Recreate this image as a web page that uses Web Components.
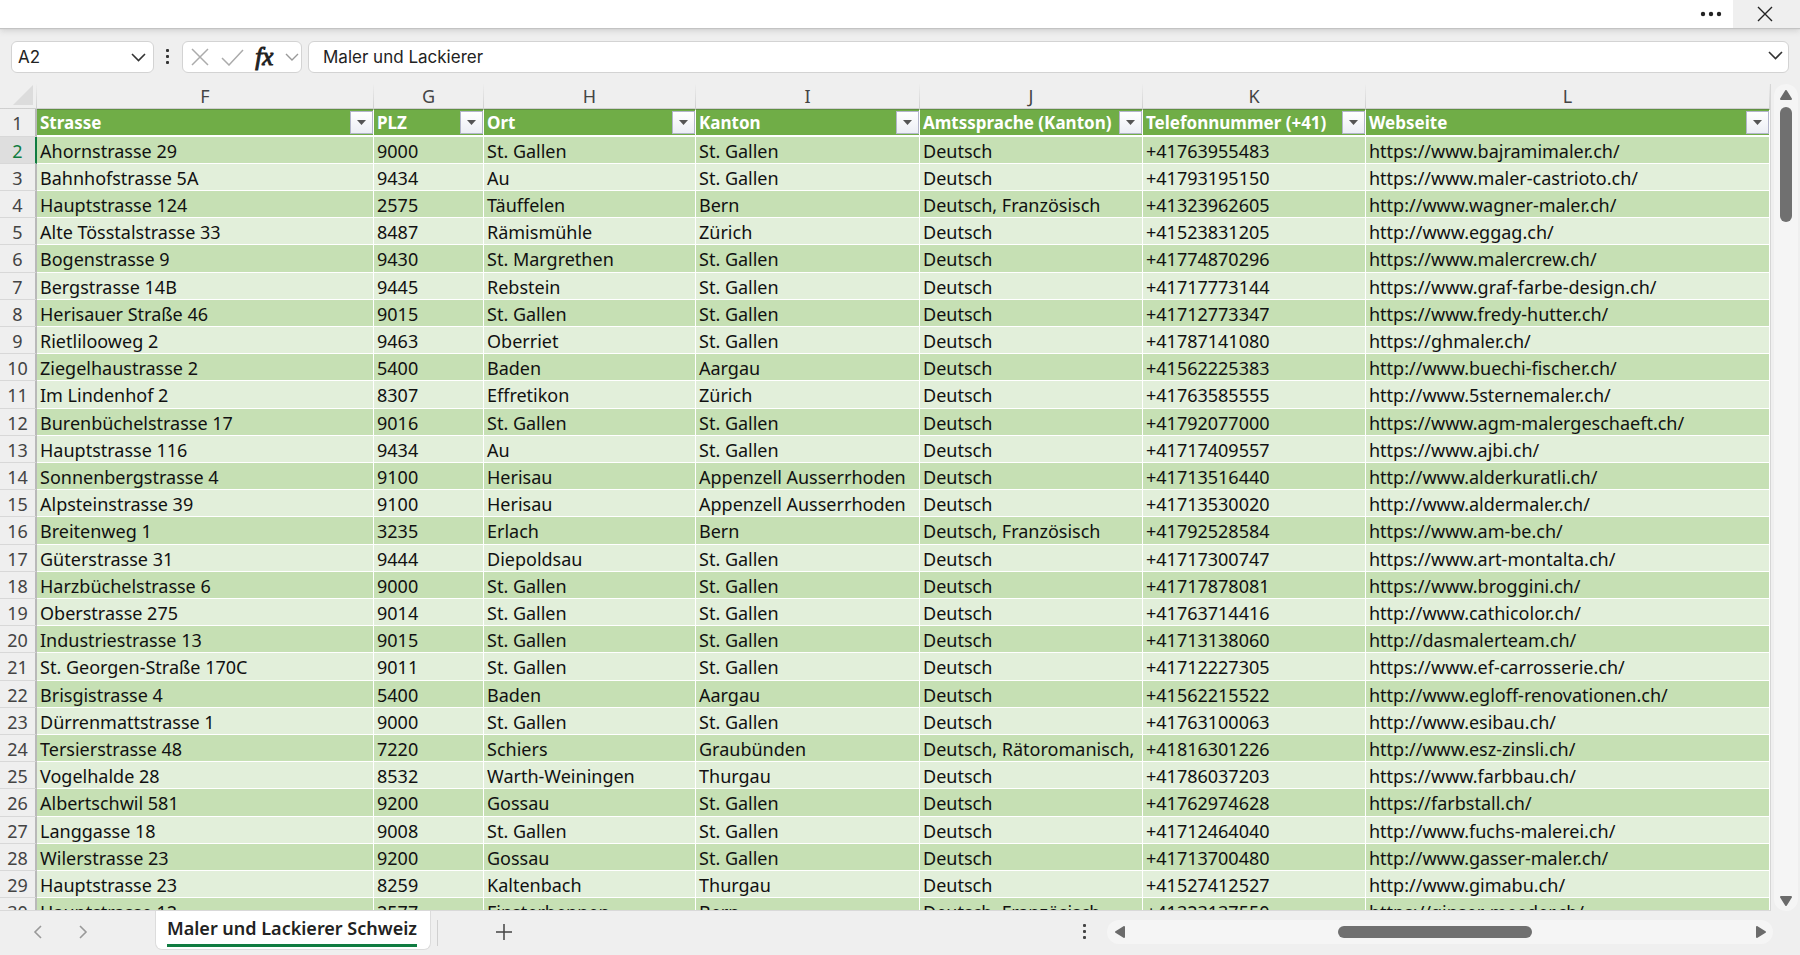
<!DOCTYPE html>
<html lang="de">
<head>
<meta charset="utf-8">
<title>Maler und Lackierer Schweiz</title>
<style>
html,body{margin:0;height:100%}
body{font-family:"Noto Sans","Open Sans",sans-serif;background:#efefef;color:#222;overflow:hidden}
</style>
</head>
<body>
<wb-app></wb-app>
<script>
const BASE = `<style>
*{box-sizing:border-box}
button{font:inherit;color:inherit;background:none;border:0;padding:0;margin:0;display:flex;align-items:center;justify-content:center}
input{font:inherit;color:inherit;border:0;background:none;padding:0;margin:0;min-width:0;outline:0}
svg{display:block;flex:none}
</style>`;
function define(name, html, setup) {
  const tpl = document.createElement('template');
  tpl.innerHTML = BASE + html;
  customElements.define(name, class extends HTMLElement {
    constructor() {
      super();
      this.attachShadow({mode: 'open'}).append(tpl.content.cloneNode(true));
    }
    connectedCallback() { if (setup) setup(this, this.shadowRoot); }
  });
}

define('wb-titlebar', `<style>
:host{display:flex;justify-content:flex-end;height:28px;background:#fff;position:relative;box-shadow:0 1px 1px #c3c3c3,0 3px 6px #d2d2d2}
button{width:44px;height:28px}
.close{width:67px;background:#efefef;padding-right:3px}
</style>
<button aria-label="Weitere Optionen"><svg width="22" height="6" fill="#222"><circle cx="3" cy="3" r="2.2"/><circle cx="11" cy="3" r="2.2"/><circle cx="19" cy="3" r="2.2"/></svg></button>
<button class="close" aria-label="Schliessen"><svg width="16" height="16" stroke="#222" stroke-width="1.4"><path d="M1 1l14 14M15 1L1 15"/></svg></button>`);

define('wb-field', `<style>
:host{display:flex;align-items:center;height:32px;background:#fff;border:1px solid #d3d3d3;border-radius:6px}
</style><slot></slot>`);

define('wb-formula-bar', `<style>
:host{display:flex;align-items:center;padding:13px 11px 11px;font-family:Inter,"Open Sans",sans-serif;font-size:17px;color:#222}
.name{width:143px;padding:0 7px 0 6px}
.name input{flex:1}
.more{width:28px;height:32px}
.fx{width:120px;justify-content:space-between;padding:0 2px 0 8px}
.formula{flex:1;margin-left:6px;padding:0 5px 0 14px}
.formula input{flex:1}
.formula button{padding-bottom:4px}
svg.fx-sign,i{font:italic 400 25px "Liberation Serif",serif;line-height:24px;color:#222;-webkit-text-stroke:1px #222}
</style>
<wb-field class="name"><input value="A2" aria-label="Namenfeld"><button aria-label="Namenfeld öffnen"><svg width="15" height="9" fill="none" stroke="#333" stroke-width="1.6"><path d="M1 1l6.500 6.500L14 1"/></svg></button></wb-field>
<button class="more" aria-label="Grösse ändern"><svg width="4" height="16" fill="#333"><rect width="3" height="3" rx="1"/><rect y="6" width="3" height="3" rx="1"/><rect y="12" width="3" height="3" rx="1"/></svg></button>
<wb-field class="fx">
<button aria-label="Abbrechen"><svg width="18" height="18" stroke="#ababab" stroke-width="1.500"><path d="M1 1l16 16M17 1L1 17"/></svg></button>
<button aria-label="Eingeben"><svg width="23" height="17" fill="none" stroke="#ababab" stroke-width="1.500"><path d="M1 9l7 7L22 1"/></svg></button>
<button aria-label="Funktion einfügen"><i>fx</i></button>
<button aria-label="Funktionen"><svg width="14" height="9" fill="none" stroke="#999" stroke-width="1.400"><path d="M1 1l6 6 6-6"/></svg></button>
</wb-field>
<wb-field class="formula"><input value="Maler und Lackierer" aria-label="Bearbeitungsleiste"><button aria-label="Bearbeitungsleiste erweitern"><svg width="15" height="9" fill="none" stroke="#333" stroke-width="1.600"><path d="M1 1l6.500 6.500L14 1"/></svg></button></wb-field>`);

define('wb-scrollbar', `<style>
:host{display:flex;background:#f5f5f5;border-radius:12px}
:host([dir-y]){flex-direction:column;align-items:center;width:24px;padding:6px 0 5px}
:host([dir-x]){align-items:center;height:24px;padding:0 7px 0 8px}
.track{flex:1;display:flex;align-self:stretch}
:host([dir-y]) .track{flex-direction:column;align-items:center;padding:7px 0}
:host([dir-x]) .track{align-items:center}
.before{flex:var(--before,0)}
.after{flex:var(--after,1)}
.thumb{flex:var(--size,1);background:#707070;border-radius:6px}
:host([dir-y]) .thumb{width:12px}
:host([dir-x]) .thumb{height:12px}
svg{fill:#6b6b6b;stroke:#6b6b6b;stroke-width:2;stroke-linejoin:round}
:host([dir-x]) svg.y,:host([dir-y]) svg.x{display:none}
</style>
<button aria-label="Zurück"><svg class="y" width="12" height="10"><path d="M6 1l5 8H1z"/></svg><svg class="x" width="10" height="12"><path d="M1 6l8-5v10z"/></svg></button>
<div class="track"><div class="before"></div><div class="thumb"></div><div class="after"></div></div>
<button aria-label="Vor"><svg class="y" width="12" height="10"><path d="M6 9l5-8H1z"/></svg><svg class="x" width="10" height="12"><path d="M9 6L1 1v10z"/></svg></button>`);

define('wb-filter', `<style>
:host{display:block;flex:none;width:23px;height:23px}
button{width:23px;height:23px;background:linear-gradient(#fff,#eceef4);border:1px solid #b3b5cb}
</style><button aria-label="Filter"><svg width="9" height="5" fill="#555"><path d="M0 0h9L4.500 5z"/></svg></button>`);

const COLS = [['F','Strasse'],['G','PLZ'],['H','Ort'],['I','Kanton'],['J','Amtssprache (Kanton)'],['K','Telefonnummer (+41)'],['L','Webseite']];
const DATA = `Ahornstrasse 29|9000|St. Gallen|St. Gallen|Deutsch|+41763955483|https://www.bajramimaler.ch/
Bahnhofstrasse 5A|9434|Au|St. Gallen|Deutsch|+41793195150|https://www.maler-castrioto.ch/
Hauptstrasse 124|2575|Täuffelen|Bern|Deutsch, Französisch|+41323962605|http://www.wagner-maler.ch/
Alte Tösstalstrasse 33|8487|Rämismühle|Zürich|Deutsch|+41523831205|http://www.eggag.ch/
Bogenstrasse 9|9430|St. Margrethen|St. Gallen|Deutsch|+41774870296|https://www.malercrew.ch/
Bergstrasse 14B|9445|Rebstein|St. Gallen|Deutsch|+41717773144|https://www.graf-farbe-design.ch/
Herisauer Straße 46|9015|St. Gallen|St. Gallen|Deutsch|+41712773347|https://www.fredy-hutter.ch/
Rietlilooweg 2|9463|Oberriet|St. Gallen|Deutsch|+41787141080|https://ghmaler.ch/
Ziegelhaustrasse 2|5400|Baden|Aargau|Deutsch|+41562225383|http://www.buechi-fischer.ch/
Im Lindenhof 2|8307|Effretikon|Zürich|Deutsch|+41763585555|http://www.5sternemaler.ch/
Burenbüchelstrasse 17|9016|St. Gallen|St. Gallen|Deutsch|+41792077000|https://www.agm-malergeschaeft.ch/
Hauptstrasse 116|9434|Au|St. Gallen|Deutsch|+41717409557|https://www.ajbi.ch/
Sonnenbergstrasse 4|9100|Herisau|Appenzell Ausserrhoden|Deutsch|+41713516440|http://www.alderkuratli.ch/
Alpsteinstrasse 39|9100|Herisau|Appenzell Ausserrhoden|Deutsch|+41713530020|http://www.aldermaler.ch/
Breitenweg 1|3235|Erlach|Bern|Deutsch, Französisch|+41792528584|https://www.am-be.ch/
Güterstrasse 31|9444|Diepoldsau|St. Gallen|Deutsch|+41717300747|https://www.art-montalta.ch/
Harzbüchelstrasse 6|9000|St. Gallen|St. Gallen|Deutsch|+41717878081|https://www.broggini.ch/
Oberstrasse 275|9014|St. Gallen|St. Gallen|Deutsch|+41763714416|http://www.cathicolor.ch/
Industriestrasse 13|9015|St. Gallen|St. Gallen|Deutsch|+41713138060|http://dasmalerteam.ch/
St. Georgen-Straße 170C|9011|St. Gallen|St. Gallen|Deutsch|+41712227305|https://www.ef-carrosserie.ch/
Brisgistrasse 4|5400|Baden|Aargau|Deutsch|+41562215522|http://www.egloff-renovationen.ch/
Dürrenmattstrasse 1|9000|St. Gallen|St. Gallen|Deutsch|+41763100063|http://www.esibau.ch/
Tersierstrasse 48|7220|Schiers|Graubünden|Deutsch, Rätoromanisch,|+41816301226|http://www.esz-zinsli.ch/
Vogelhalde 28|8532|Warth-Weiningen|Thurgau|Deutsch|+41786037203|https://www.farbbau.ch/
Albertschwil 581|9200|Gossau|St. Gallen|Deutsch|+41762974628|https://farbstall.ch/
Langgasse 18|9008|St. Gallen|St. Gallen|Deutsch|+41712464040|http://www.fuchs-malerei.ch/
Wilerstrasse 23|9200|Gossau|St. Gallen|Deutsch|+41713700480|http://www.gasser-maler.ch/
Hauptstrasse 23|8259|Kaltenbach|Thurgau|Deutsch|+41527412527|http://www.gimabu.ch/
Hauptstrasse 12|2577|Finsterhennen|Bern|Deutsch, Französisch|+41323137550|https://ginser-meeder.ch/`.split('\n').map(r => r.split('|'));

define('wb-sheet', `<style>
:host{display:block;overflow:hidden;min-height:0;border-right:1px solid #d6d6d6;border-bottom:1px solid #d9d9d9}
table{width:100%;table-layout:fixed;border-collapse:separate;border-spacing:0;font-size:18px;line-height:24px;color:#111}
th,td{padding:0 0 0 3px;text-align:left;white-space:nowrap;overflow:hidden;height:27px;border-right:1px solid #fff;border-bottom:1px solid #fff}
.letters th{height:25px;padding:0;text-align:center;font-weight:400;font-size:18px;line-height:22px;color:#444;border-bottom:1px solid #a3a0a6;border-right:1px solid;border-image:linear-gradient(#efefef,#cfcfcf) 1}
.letters th:first-child{padding:0 3px 2px 0}
.letters svg{margin-left:auto}
.titles th{height:28px;background:#70ad47;color:#fff;font-size:17px;font-weight:700;border-bottom:2px solid #fff;border-top:1px solid #5f8f42}
.titles div{display:flex;align-items:center;justify-content:space-between;height:25px}
tbody td{padding-top:1px}
tbody tr:nth-child(odd) td{background:#c6e0b4}
tbody tr:nth-child(even) td{background:#e2efda}
tbody tr:nth-child(5n) td{height:28px}
tbody th,.titles th:first-child{background:#efefef;color:#444;font-weight:400;font-size:18px;text-align:center;padding:1px 0 0;border:0;border-right:2px solid #b9b9b9;border-bottom:1px solid #d8d8d8}
tbody tr:first-child th{background:#dedede;color:#107c41;border-right-color:#107c41}
</style>
<table><colgroup><col style="width:37px"><col style="width:337px"><col style="width:110px"><col style="width:212px"><col style="width:224px"><col style="width:223px"><col style="width:223px"><col></colgroup>
<thead><tr class="letters"><th><svg width="20" height="20" fill="#dcdcdc"><path d="M20 0v20H0z"/></svg></th></tr><tr class="titles"><th scope="row">1</th></tr></thead><tbody></tbody></table>`,
(host, root) => {
  const letters = root.querySelector('.letters'), titles = root.querySelector('.titles'), body = root.querySelector('tbody');
  for (const [l, t] of COLS) {
    letters.insertAdjacentHTML('beforeend', `<th scope="col">${l}</th>`);
    titles.insertAdjacentHTML('beforeend', `<th scope="col"><div><span>${t}</span><wb-filter></wb-filter></div></th>`);
  }
  body.innerHTML = DATA.map((r, i) => `<tr><th scope="row">${i + 2}</th>${r.map(c => `<td>${c}</td>`).join('')}</tr>`).join('');
});

define('wb-tabs', `<style>
:host{display:flex;align-items:flex-start;height:44px;padding-right:27px}
nav{display:flex;padding-left:14px}
nav button{width:46px;height:42px}
.tab{height:39px;margin-left:49px;padding:0 13px 0 11px;background:#fff;border:1px solid #dcdcdc;border-top:0;border-radius:0 0 7px 7px;font-size:18px;font-weight:600;line-height:30px}
.tab span{border-bottom:3px solid #107c41;height:34px}
.sep{width:1px;height:26px;margin:9px 0 0 6px;background:#d0d0d0}
.add{width:32px;height:42px;margin-left:50px}
.more{width:20px;height:42px;margin-left:auto}
wb-scrollbar{width:calc(38% - 8px);margin:9px 0 0 12px;--before:213;--size:195;--after:225}
</style>
<nav>
<button aria-label="Vorheriges Blatt"><svg width="9" height="14" fill="none" stroke="#999" stroke-width="1.600"><path d="M8 1L2 7l6 6"/></svg></button>
<button aria-label="Nächstes Blatt"><svg width="9" height="14" fill="none" stroke="#999" stroke-width="1.600"><path d="M1 1l6 6-6 6"/></svg></button>
</nav>
<button class="tab"><span>Maler und Lackierer Schweiz</span></button>
<div class="sep"></div>
<button class="add" aria-label="Neues Blatt"><svg width="16" height="16" stroke="#444" stroke-width="1.500"><path d="M8 0v16M0 8h16"/></svg></button>
<button class="more" aria-label="Blattleiste anpassen"><svg width="4" height="16" fill="#444"><rect width="3" height="3" rx="1"/><rect y="6" width="3" height="3" rx="1"/><rect y="12" width="3" height="3" rx="1"/></svg></button>
<wb-scrollbar dir-x></wb-scrollbar>`);

define('wb-app', `<style>
:host{display:flex;flex-direction:column;height:100vh}
main{flex:1;min-height:0;display:grid;grid-template-columns:minmax(0,1fr) 24px;grid-template-rows:minmax(0,1fr);gap:3px;padding-right:2px}
main wb-scrollbar{--before:0;--size:115;--after:665}
</style>
<wb-titlebar></wb-titlebar>
<wb-formula-bar></wb-formula-bar>
<main><wb-sheet></wb-sheet><wb-scrollbar dir-y></wb-scrollbar></main>
<wb-tabs></wb-tabs>`);
</script>
</body>
</html>
